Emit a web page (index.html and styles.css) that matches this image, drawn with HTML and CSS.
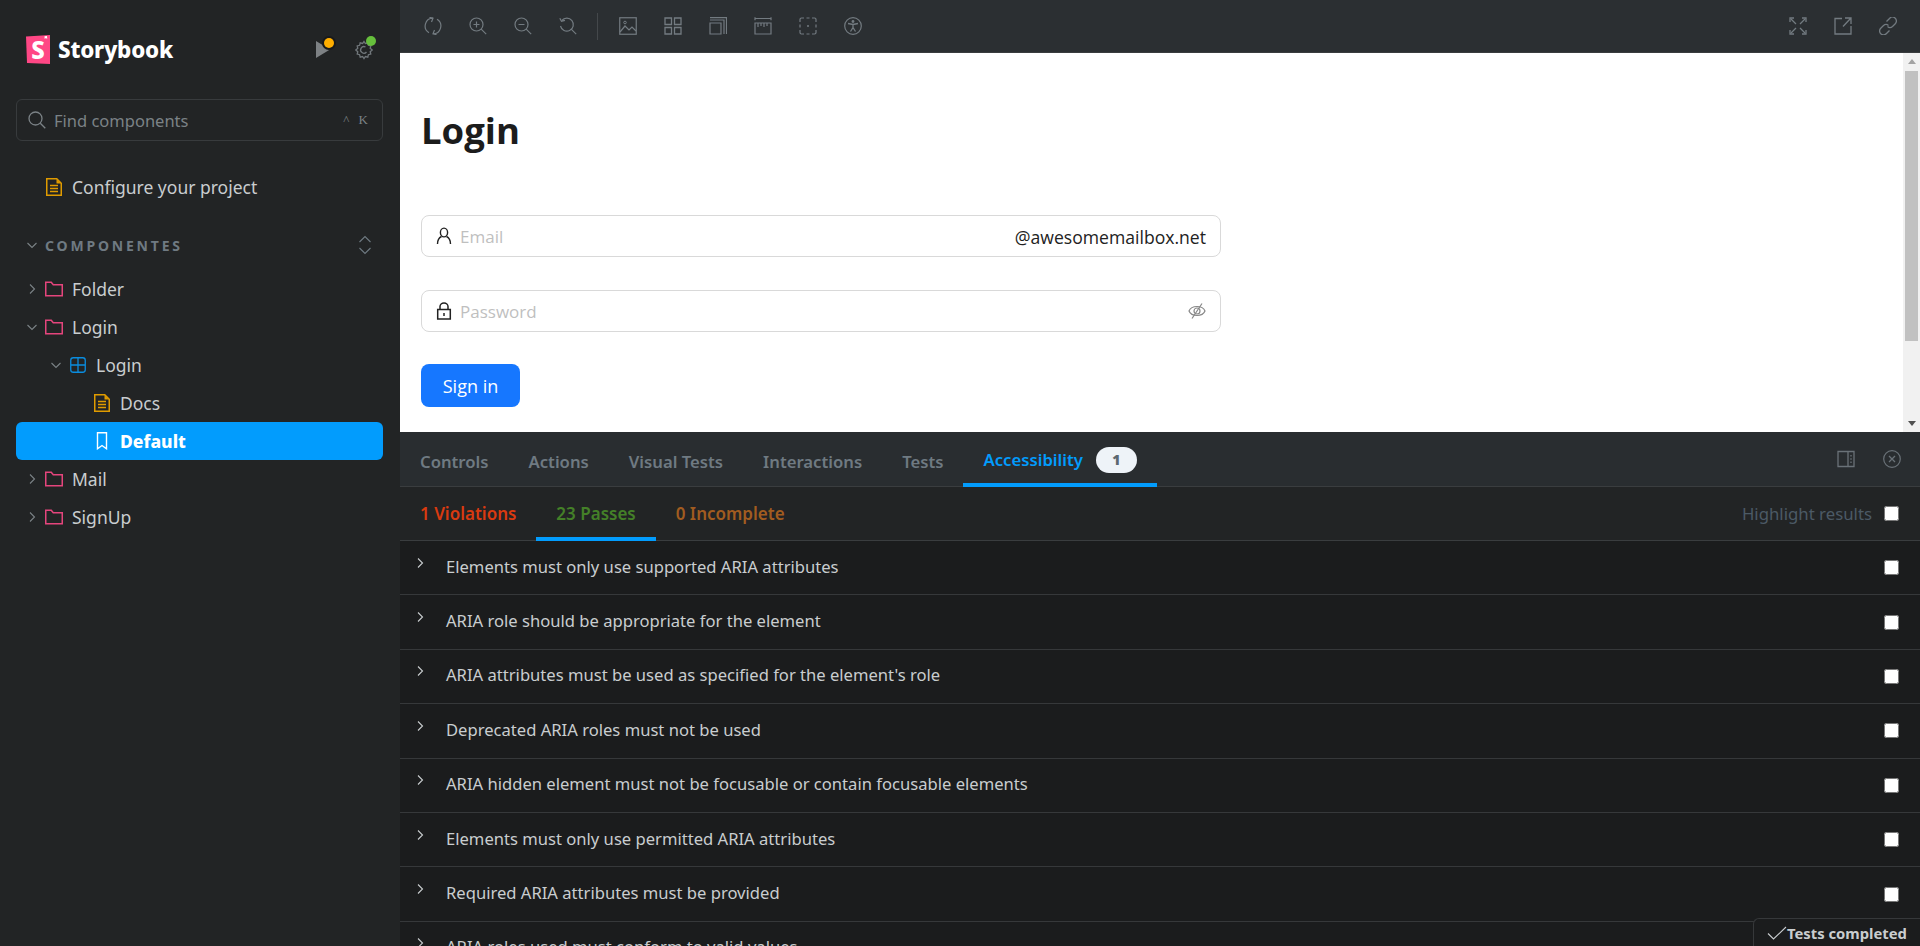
FILE: index.html
```html
<!DOCTYPE html>
<html lang="en">
<head>
    <meta charset="UTF-8">
    <title>Login - Default - Storybook</title>
    <link rel="stylesheet" href="styles.css">
</head>
<body>
    <svg class="sprite" xmlns="http://www.w3.org/2000/svg">
        <symbol id="i-chev-right" viewBox="0 0 12 12"><path d="M4 1.5 8.5 6 4 10.5" fill="none" stroke="currentColor" stroke-width="1.1"/></symbol>
        <symbol id="i-chev-down" viewBox="0 0 12 12"><path d="M1.5 4 6 8.5 10.5 4" fill="none" stroke="currentColor" stroke-width="1.1"/></symbol>
        <symbol id="i-folder" viewBox="0 0 18 16"><path d="M.75 14.75V1.25h5.5l2 2.5h9v11z" fill="none" stroke="currentColor" stroke-width="1.5"/></symbol>
        <symbol id="i-doc" viewBox="0 0 16 18"><path d="M.75 17.25V.75h10l4.5 4.5v12zM4 7.5h8M4 10.5h8M4 13.5h8" fill="none" stroke="currentColor" stroke-width="1.5"/><path d="M10.5 1v4.5H15z" fill="currentColor"/></symbol>
    </svg>

    <aside class="sidebar">
        <div class="brand">
            <svg class="brand-logo" viewBox="0 0 24 29"><path d="M0 1.5 24 0v29L1 28z" fill="#ff4785"/><path d="M18.5 1.3 21 1l.2 3-1.3-.9-1.2.9z" fill="#fff"/></svg>
            <span class="brand-s">S</span>
            <span class="brand-name">Storybook</span>
            <span class="brand-tools">
                <span class="brand-tool">
                    <svg width="14" height="17" viewBox="0 0 14 17"><path d="M0 0 14 8.5 0 17z" fill="#7d8184"/></svg>
                    <i class="dot dot-orange"></i>
                </span>
                <span class="brand-tool">
                    <svg width="20" height="20" viewBox="0 0 20 20"><path d="M10 1.5l1.4 2 2.4-.6.6 2.4 2.4.6-.6 2.4 2 1.7-2 1.7.6 2.4-2.4.6-.6 2.4-2.4-.6-1.4 2-1.4-2-2.4.6-.6-2.4-2.4-.6.6-2.4-2-1.7 2-1.7-.6-2.4 2.4-.6.6-2.4 2.4.6z" fill="none" stroke="#71777b" stroke-width="1.3"/><path d="M12.5 12a3.3 3.3 0 1 1-1-5" fill="none" stroke="#71777b" stroke-width="1.3"/></svg>
                    <i class="dot dot-green"></i>
                </span>
            </span>
        </div>

        <div class="search">
            <svg width="18" height="18" viewBox="0 0 18 18"><circle cx="7.5" cy="7.5" r="6.5" fill="none" stroke="currentColor" stroke-width="1.3"/><path d="m12.3 12.3 5 5" stroke="currentColor" stroke-width="1.3"/></svg>
            <span class="search-label">Find components</span>
            <span class="search-keys">^ K</span>
        </div>

        <div class="tree-row tree-top">
            <span class="chev-slot"></span>
            <svg class="tree-icon icon-doc"><use href="#i-doc"/></svg>
            <span>Configure your project</span>
        </div>

        <div class="section-head">
            <svg class="chev-slot"><use href="#i-chev-down"/></svg>
            <span class="section-name">COMPONENTES</span>
            <svg class="section-toggle" width="14" height="20" viewBox="0 0 14 20"><path d="M1.5 7 7 1.5 12.5 7M1.5 13 7 18.5 12.5 13" fill="none" stroke="currentColor" stroke-width="1.1"/></svg>
        </div>

        <nav class="tree">
            <div class="tree-row">
                <svg class="chev-slot"><use href="#i-chev-right"/></svg>
                <svg class="tree-icon icon-folder"><use href="#i-folder"/></svg>
                <span>Folder</span>
            </div>
            <div class="tree-row">
                <svg class="chev-slot"><use href="#i-chev-down"/></svg>
                <svg class="tree-icon icon-folder"><use href="#i-folder"/></svg>
                <span>Login</span>
            </div>
            <div class="tree-row depth-2">
                <svg class="chev-slot"><use href="#i-chev-down"/></svg>
                <svg class="tree-icon icon-grid" viewBox="0 0 18 18"><rect x="1.75" y="1.75" width="14.5" height="14.5" rx="2.5" fill="none" stroke="currentColor" stroke-width="1.3"/><path d="M9 2v14M2 9h14" stroke="currentColor" stroke-width="1.3"/></svg>
                <span>Login</span>
            </div>
            <div class="tree-row depth-3">
                <span class="chev-slot"></span>
                <svg class="tree-icon icon-doc"><use href="#i-doc"/></svg>
                <span>Docs</span>
            </div>
            <div class="tree-row depth-3 active">
                <span class="chev-slot"></span>
                <svg class="tree-icon" viewBox="0 0 18 18"><path d="M4.5.75h9v16L9 13.5l-4.5 3.25z" fill="none" stroke="currentColor" stroke-width="1.4"/></svg>
                <span>Default</span>
            </div>
            <div class="tree-row">
                <svg class="chev-slot"><use href="#i-chev-right"/></svg>
                <svg class="tree-icon icon-folder"><use href="#i-folder"/></svg>
                <span>Mail</span>
            </div>
            <div class="tree-row">
                <svg class="chev-slot"><use href="#i-chev-right"/></svg>
                <svg class="tree-icon icon-folder"><use href="#i-folder"/></svg>
                <span>SignUp</span>
            </div>
        </nav>
    </aside>

    <main class="content">
        <div class="toolbar">
            <span class="tool"><svg viewBox="0 0 18 18"><path d="M9 1.2A7.8 7.8 0 0 0 5 15.7M9 16.8A7.8 7.8 0 0 0 13 2.3M5.5.3 9 1.2 7.5 5M12.5 17.7 9 16.8 10.5 13" fill="none" stroke="currentColor" stroke-width="1.2"/></svg></span>
            <span class="tool"><svg viewBox="0 0 18 18"><circle cx="7.5" cy="7.5" r="6.5" fill="none" stroke="currentColor" stroke-width="1.2"/><path d="m12.2 12.2 5 5M4.5 7.5h6M7.5 4.5v6" stroke="currentColor" stroke-width="1.2"/></svg></span>
            <span class="tool"><svg viewBox="0 0 18 18"><circle cx="7.5" cy="7.5" r="6.5" fill="none" stroke="currentColor" stroke-width="1.2"/><path d="m12.2 12.2 5 5M4.5 7.5h6" stroke="currentColor" stroke-width="1.2"/></svg></span>
            <span class="tool"><svg viewBox="0 0 18 18"><path d="M2.8 3.5A6.5 6.5 0 1 1 1.5 9" fill="none" stroke="currentColor" stroke-width="1.2"/><path d="M.8 1.2 2.5 4.2 6 3.4M12.2 12.2l5 5" fill="none" stroke="currentColor" stroke-width="1.2"/></svg></span>
            <span class="tool-sep"></span>
            <span class="tool"><svg viewBox="0 0 18 18"><rect x=".75" y=".75" width="16.5" height="16.5" fill="none" stroke="currentColor" stroke-width="1.2"/><path d="m1 15 5-6 4 4 3-3 4 4" fill="none" stroke="currentColor" stroke-width="1.2"/><circle cx="6" cy="5.5" r="1.3" fill="none" stroke="currentColor"/></svg></span>
            <span class="tool"><svg viewBox="0 0 18 18"><path d="M1 1h6.5v6.5H1zM10.5 1H17v6.5h-6.5zM1 10.5h6.5V17H1zM10.5 10.5H17V17h-6.5z" fill="none" stroke="currentColor" stroke-width="1.3"/></svg></span>
            <span class="tool"><svg viewBox="0 0 18 18"><path d="M1 6h11v11H1zM1 3h14v14M1 .7h16.5V17" fill="none" stroke="currentColor" stroke-width="1.2"/></svg></span>
            <span class="tool"><svg viewBox="0 0 18 18"><path d="M1 1.5h16M1 .2v3M17 .2v3M1 6h16v11H1zM4 6v4M7 6v3M10 6v4M13 6v3" fill="none" stroke="currentColor" stroke-width="1.2"/></svg></span>
            <span class="tool"><svg viewBox="0 0 18 18"><path d="M1 5V2.5A1.5 1.5 0 0 1 2.5 1H5M13 1h2.5A1.5 1.5 0 0 1 17 2.5V5M17 13v2.5a1.5 1.5 0 0 1-1.5 1.500H13M5 17H2.500A1.500 1.500 0 0 1 1 15.500V13M7.500 1h3M7.500 17h3M1 7.500v3M17 7.500v3" fill="none" stroke="currentColor" stroke-width="1.2"/><circle cx="9" cy="9" r="1" fill="currentColor"/></svg></span>
            <span class="tool"><svg viewBox="0 0 18 18"><circle cx="9" cy="9" r="8.3" fill="none" stroke="currentColor" stroke-width="1.2"/><circle cx="9" cy="4.5" r="1.4" fill="currentColor"/><path d="M4 6.5 9 7.5l5-1M9 7.5v3l-2.500 4M9 10.500l2.500 4" fill="none" stroke="currentColor" stroke-width="1.3"/></svg></span>
            <span class="toolbar-right">
                <span class="tool"><svg viewBox="0 0 18 18"><path d="M2 2l5 5M16 2l-5 5M2 16l5-5M16 16l-5-5" stroke="currentColor" stroke-width="1.3"/><path d="M1 5V1h4M13 1h4v4M1 13v4h4M13 17h4v-4" fill="none" stroke="currentColor" stroke-width="1.3"/></svg></span>
                <span class="tool"><svg viewBox="0 0 18 18"><path d="M8 1.5H1V17h16V9M9 9.5l7.500-8M11 1h6v6" fill="none" stroke="currentColor" stroke-width="1.3"/></svg></span>
                <span class="tool"><svg viewBox="0 0 18 18"><path d="m7.5 4.500 3-3a3.700 3.700 0 0 1 6 5l-3 3a3.700 3.700 0 0 1-5 0M10.500 13.500l-3 3a3.700 3.700 0 0 1-6-5l3-3a3.700 3.700 0 0 1 5 0" fill="none" stroke="currentColor" stroke-width="1.3"/></svg></span>
            </span>
        </div>

        <section class="preview">
            <div class="login-page">
                <h1 class="login-title">Login</h1>
                <div class="login-field">
                    <svg width="16" height="18" viewBox="0 0 16 18"><ellipse cx="8" cy="5.5" rx="3.6" ry="4.4" fill="none" stroke="#222" stroke-width="1.4"/><path d="M1.5 17c0-4 2-6.500 4-7.500M14.500 17c0-4-2-6.500-4-7.500" fill="none" stroke="#222" stroke-width="1.4"/></svg>
                    <span class="login-placeholder">Email</span>
                    <span class="login-suffix">@awesomemailbox.net</span>
                </div>
                <div class="login-field">
                    <svg width="16" height="18" viewBox="0 0 16 18"><rect x="1.7" y="7.5" width="12.6" height="9.5" fill="none" stroke="#222" stroke-width="1.5"/><path d="M4 7.5v-3a4 3.500 0 0 1 8 0v3" fill="none" stroke="#222" stroke-width="1.5"/><path d="M8 11v3" stroke="#222" stroke-width="1.5"/></svg>
                    <span class="login-placeholder">Password</span>
                    <svg class="login-eye" width="18" height="18" viewBox="0 0 18 18"><path d="M1 9c2.500-6 13.500-6 16 0-2.500 6-13.500 6-16 0z" fill="none" stroke="#888" stroke-width="1.2"/><circle cx="9" cy="9" r="3" fill="none" stroke="#888" stroke-width="1.2"/><path d="M14 1.500 4 16.500" stroke="#888" stroke-width="1.2"/></svg>
                </div>
                <button class="login-btn">Sign in</button>
            </div>
            <div class="scrollbar">
                <span class="scroll-up"></span>
                <span class="scroll-thumb"></span>
                <span class="scroll-down"></span>
            </div>
        </section>

        <section class="panel">
            <div class="tabs">
                <span class="tab">Controls</span>
                <span class="tab">Actions</span>
                <span class="tab">Visual Tests</span>
                <span class="tab">Interactions</span>
                <span class="tab">Tests</span>
                <span class="tab tab-active">Accessibility <b class="tab-badge">1</b></span>
                <span class="tabs-right">
                    <svg width="18" height="18" viewBox="0 0 18 18"><path d="M1 1.5h16v15H1zM11 1.5v15M14 5v1.500M14 8.300v1.500M14 11.500V13" fill="none" stroke="currentColor" stroke-width="1.3"/></svg>
                    <svg width="18" height="18" viewBox="0 0 18 18"><circle cx="9" cy="9" r="8.3" fill="none" stroke="currentColor" stroke-width="1.2"/><path d="m6 6 6 6M12 6l-6 6" stroke="currentColor" stroke-width="1.3"/></svg>
                </span>
            </div>
            <div class="subtabs">
                <span class="subtab sub-red">1 Violations</span>
                <span class="subtab sub-green subtab-active">23 Passes</span>
                <span class="subtab sub-orange">0 Incomplete</span>
                <label class="highlight">Highlight results <input type="checkbox" class="rule-check"></label>
            </div>
            <div class="rules">
                <div class="rule"><svg class="rule-chev"><use href="#i-chev-right"/></svg><span class="rule-name">Elements must only use supported ARIA attributes</span><input type="checkbox" class="rule-check"></div>
                <div class="rule"><svg class="rule-chev"><use href="#i-chev-right"/></svg><span class="rule-name">ARIA role should be appropriate for the element</span><input type="checkbox" class="rule-check"></div>
                <div class="rule"><svg class="rule-chev"><use href="#i-chev-right"/></svg><span class="rule-name">ARIA attributes must be used as specified for the element's role</span><input type="checkbox" class="rule-check"></div>
                <div class="rule"><svg class="rule-chev"><use href="#i-chev-right"/></svg><span class="rule-name">Deprecated ARIA roles must not be used</span><input type="checkbox" class="rule-check"></div>
                <div class="rule"><svg class="rule-chev"><use href="#i-chev-right"/></svg><span class="rule-name">ARIA hidden element must not be focusable or contain focusable elements</span><input type="checkbox" class="rule-check"></div>
                <div class="rule"><svg class="rule-chev"><use href="#i-chev-right"/></svg><span class="rule-name">Elements must only use permitted ARIA attributes</span><input type="checkbox" class="rule-check"></div>
                <div class="rule"><svg class="rule-chev"><use href="#i-chev-right"/></svg><span class="rule-name">Required ARIA attributes must be provided</span><input type="checkbox" class="rule-check"></div>
                <div class="rule"><svg class="rule-chev"><use href="#i-chev-right"/></svg><span class="rule-name">ARIA roles used must conform to valid values</span><input type="checkbox" class="rule-check"></div>
            </div>
            <div class="tests-status">
                <svg width="20" height="14" viewBox="0 0 20 14"><path d="M1 7.5 6.500 13 19 1" fill="none" stroke="#c9cdcf" stroke-width="1.1"/></svg>
                <span>Tests completed</span>
            </div>
        </section>
    </main>
</body>
</html>
```

FILE: styles.css
```css
html, body {
    height: 100%;
}
body {
    margin: 0;
    display: flex;
    height: 100vh;
    overflow: hidden;
    font-family: 'Noto Sans', 'Open Sans', Arial, sans-serif;
    background: #222425;
    color: #c9cdcf;
}
.sprite {
    display: none;
}
.sidebar {
    width: 400px;
    flex: none;
    background: #222425;
    padding-top: 35px;
    box-sizing: border-box;
}
.brand {
    position: relative;
    display: flex;
    align-items: center;
    height: 29px;
    padding-left: 26px;
    padding-right: 26px;
}
.brand-logo {
    width: 24px;
    height: 29px;
    flex: none;
}
.brand-s {
    position: absolute;
    left: 26px;
    width: 24px;
    text-align: center;
    color: #fff;
    font-size: 24px;
    font-weight: 800;
    line-height: 29px;
}
.brand-name {
    margin-left: 8px;
    color: #fff;
    font-size: 22.4px;
    font-weight: 800;
    letter-spacing: -0.2px;
}
.brand-tools {
    margin-left: auto;
    display: flex;
    align-items: center;
    gap: 24px;
}
.brand-tool {
    position: relative;
    display: flex;
    align-items: center;
}
.dot {
    position: absolute;
    width: 10px;
    height: 10px;
    border-radius: 50%;
    top: -4px;
}
.dot-orange {
    background: #ffae00;
    box-shadow: 0 0 0 2px #191a1b;
    top: -3px;
    right: -4px;
}
.dot-green {
    background: #66bf3c;
    right: -2px;
}
.search {
    display: flex;
    align-items: center;
    margin: 35px 17px 0 16px;
    height: 42px;
    padding: 0 14px 0 11px;
    border: 1px solid #383b3d;
    border-radius: 6px;
    box-sizing: border-box;
    color: #7b8286;
}
.search-label {
    margin-left: 8px;
    font-size: 16.5px;
}
.search-keys {
    margin-left: auto;
    font-family: 'Liberation Serif', serif;
    font-size: 13px;
    word-spacing: 6px;
}
.tree-row {
    display: flex;
    align-items: center;
    height: 38px;
    margin: 0 17px 0 16px;
    padding-left: 10px;
    border-radius: 6px;
    font-size: 17.5px;
    color: #c9cdcf;
}
.tree-top {
    margin-top: 27px;
}
.chev-slot {
    width: 12px;
    height: 12px;
    flex: none;
    color: #7b8286;
}
.tree-icon {
    width: 18px;
    height: 18px;
    flex: none;
    margin: 0 9px 0 7px;
}
.icon-doc {
    color: #e09b00;
}
.icon-folder {
    color: #e5457d;
}
.icon-grid {
    color: #0a8de0;
}
.section-head {
    display: flex;
    align-items: center;
    height: 30px;
    margin: 24px 16px 0;
    padding: 0 12px 0 10px;
    color: #6f7a82;
}
.section-name {
    margin-left: 7px;
    font-size: 14px;
    font-weight: 700;
    letter-spacing: 2.8px;
}
.section-toggle {
    margin-left: auto;
}
.tree {
    margin-top: 10px;
}
.depth-2 {
    padding-left: 34px;
}
.depth-3 {
    padding-left: 58px;
}
.active {
    background: #029cfd;
    color: #fff;
    font-weight: 800;
}
.content {
    flex: 1;
    min-width: 0;
    display: flex;
    flex-direction: column;
}
.toolbar {
    height: 53px;
    flex: none;
    display: flex;
    align-items: center;
    padding: 0 10px;
    box-sizing: border-box;
    background: #2b2f32;
    border-bottom: 1px solid #3a3d3f;
    color: #737b81;
}
.tool {
    width: 45px;
    height: 45px;
    display: flex;
    align-items: center;
    justify-content: center;
}
.tool svg {
    width: 18px;
    height: 18px;
}
.tool-sep {
    width: 1px;
    height: 27px;
    margin: 0 7px;
    background: #44484b;
}
.toolbar-right {
    margin-left: auto;
    display: flex;
}
.preview {
    height: 379px;
    flex: none;
    display: flex;
    background: #fff;
    overflow: hidden;
}
.login-page {
    flex: 1;
    padding: 0 21px;
    color: #222;
    font-family: 'Open Sans', 'Noto Sans', Arial, sans-serif;
}
.login-title {
    margin: 49px 0 0;
    height: 113px;
    font-size: 36.5px;
    font-weight: 700;
    line-height: 56px;
    color: #1c1c1c;
}
.login-field {
    display: flex;
    align-items: center;
    width: 800px;
    height: 42px;
    padding: 0 14px;
    margin-bottom: 33px;
    box-sizing: border-box;
    border: 1px solid #d9d9d9;
    border-radius: 8px;
    font-size: 17px;
}
.login-placeholder {
    margin-left: 8px;
    color: #bfbfbf;
    padding-top: 1px;
}
.login-suffix {
    margin-left: auto;
    color: #222;
    font-size: 17.6px;
    padding-top: 1px;
}
.login-eye {
    margin-left: auto;
}
.login-btn {
    display: block;
    width: 99px;
    height: 43px;
    margin-top: -1px;
    border: 0;
    border-radius: 8px;
    background: #1677ff;
    color: #fff;
    font-family: inherit;
    font-size: 18px;
}
.scrollbar {
    width: 17px;
    flex: none;
    display: flex;
    flex-direction: column;
    align-items: center;
    background: #f1f1f1;
}
.scroll-up {
    margin-top: 6px;
    border: 4px solid transparent;
    border-top: 0;
    border-bottom: 5px solid #a3a3a3;
}
.scroll-thumb {
    width: 13px;
    height: 270px;
    margin-top: 7px;
    background: #c1c1c1;
}
.scroll-down {
    margin-top: auto;
    margin-bottom: 6px;
    border: 4px solid transparent;
    border-bottom: 0;
    border-top: 5px solid #505050;
}
.panel {
    position: relative;
    flex: 1;
    min-height: 0;
    display: flex;
    flex-direction: column;
    overflow: hidden;
    background: #1b1c1d;
}
.tabs {
    height: 55px;
    flex: none;
    display: flex;
    box-sizing: border-box;
    padding-right: 19px;
    background: #292d30;
    border-bottom: 1px solid #3a3d3f;
}
.tab {
    display: flex;
    align-items: center;
    padding: 4px 20px 0;
    font-size: 16.7px;
    font-weight: 600;
    color: #6f7a82;
}
.tab-active {
    color: #029cfd;
    border-bottom: 4px solid #029cfd;
    margin-bottom: -1px;
}
.tab-badge {
    margin-left: 13px;
    width: 41px;
    height: 26px;
    border-radius: 13px;
    background: #eef3f8;
    color: #5c6870;
    font-size: 14px;
    line-height: 26px;
    text-align: center;
}
.tabs-right {
    margin-left: auto;
    display: flex;
    align-items: center;
    gap: 28px;
    color: #6a7278;
}
.subtabs {
    height: 54px;
    flex: none;
    display: flex;
    box-sizing: border-box;
    padding-right: 21px;
    background: #222425;
    border-bottom: 1px solid #3a3d3f;
    font-size: 17px;
    font-weight: 600;
}
.subtab {
    display: flex;
    align-items: center;
    padding: 0 20px;
}
.subtab-active {
    border-bottom: 4px solid #029cfd;
    margin-bottom: -1px;
    padding-top: 3px;
}
.sub-red {
    color: #d93a10;
}
.sub-green {
    color: #448028;
}
.sub-orange {
    color: #a15c20;
}
.highlight {
    margin-left: auto;
    display: flex;
    align-items: center;
    gap: 12px;
    color: #4c5a65;
    font-size: 16.8px;
    font-weight: 400;
}
.rules {
    flex: 1;
}
.rule {
    display: flex;
    align-items: center;
    height: 54.4px;
    box-sizing: border-box;
    padding-right: 21px;
    border-bottom: 1px solid #36383a;
    font-size: 16.6px;
    color: #c9cdcf;
}
.rule-chev {
    width: 12px;
    height: 12px;
    flex: none;
    margin: -10px 14px 0 14px;
}
.rule-name {
    margin-left: 6px;
    padding-bottom: 3px;
}
.rule-check {
    width: 15px;
    height: 15px;
    margin: 0 0 0 auto;
    flex: none;
}
.highlight .rule-check {
    margin: 0;
}
.tests-status {
    position: absolute;
    right: 0;
    bottom: 0;
    width: 167px;
    height: 28px;
    display: flex;
    align-items: center;
    padding-left: 13px;
    box-sizing: border-box;
    background: #1b1c1d;
    border: 1px solid #36383a;
    border-right: 0;
    border-bottom: 0;
    border-top-left-radius: 6px;
    font-size: 14.8px;
    font-weight: 700;
    color: #c9cdcf;
}
```
